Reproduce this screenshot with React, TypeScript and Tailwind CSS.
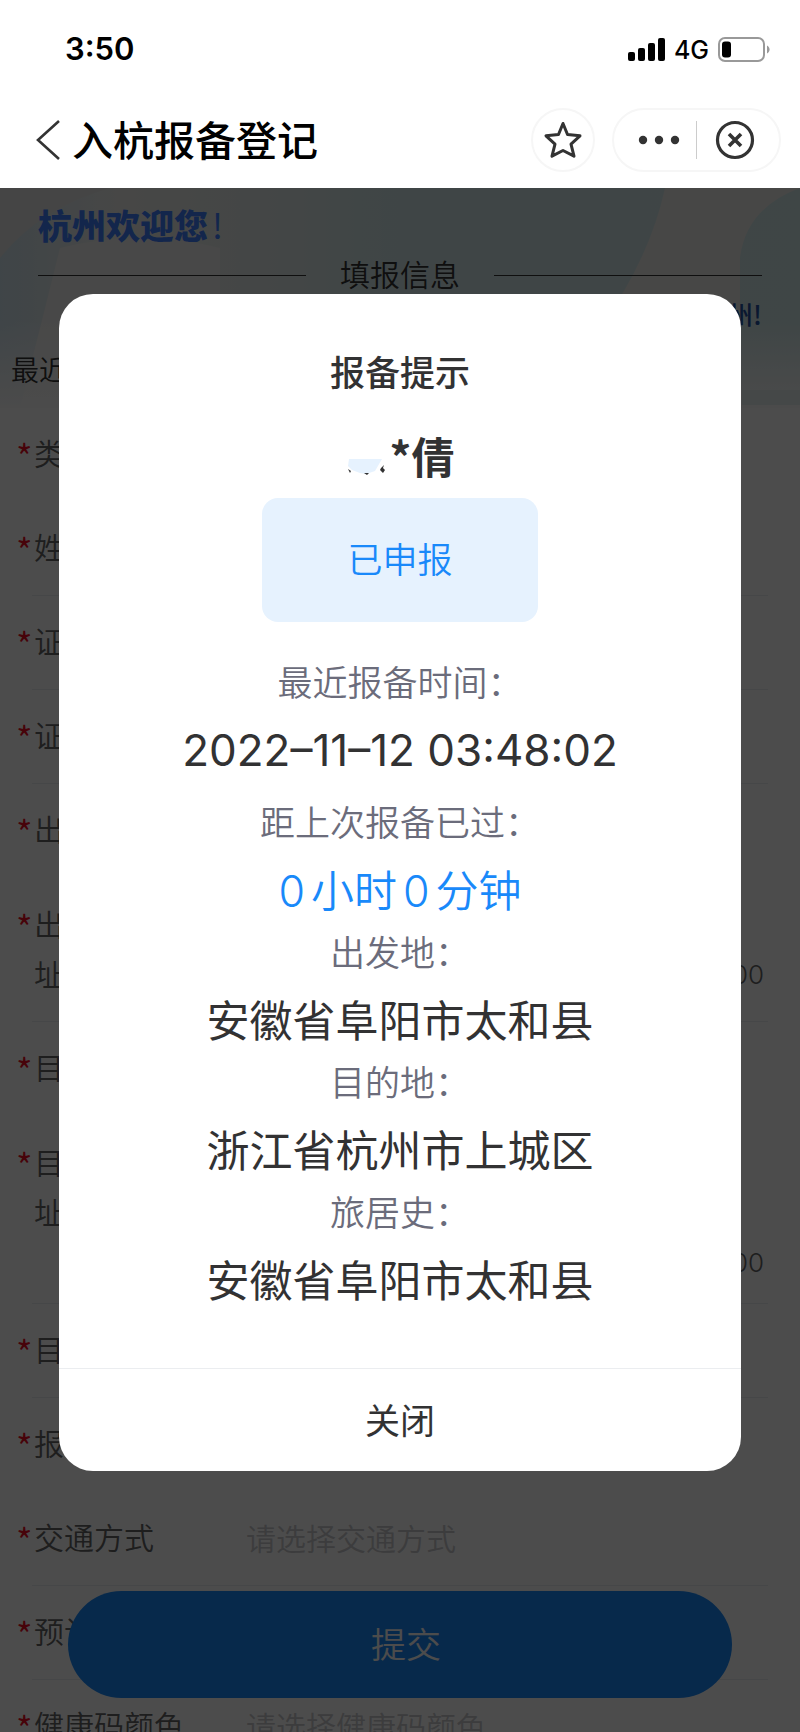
import { useId } from "react";
import clsx from "clsx";

interface FieldProps {
  label: string;
  placeholder?: string;
  divider?: boolean;
}

const RECORDS = [
  { label: "出发地：", value: "安徽省阜阳市太和县" },
  { label: "目的地：", value: "浙江省杭州市上城区" },
  { label: "旅居史：", value: "安徽省阜阳市太和县" },
];

function StatusBar() {
  return (
    <div className="flex h-[98px] items-center justify-between pr-[30px] pl-[65px] font-['Inter',sans-serif] text-black">
      <span className="text-[31px] font-semibold">3:50</span>
      <div className="flex items-center gap-[9px]">
        <svg width="37" height="24" viewBox="0 0 37 24" fill="currentColor" aria-hidden="true">
          <rect x="0" y="15" width="7" height="9" rx="2" />
          <rect x="10" y="11" width="7" height="13" rx="2" />
          <rect x="20" y="6" width="7" height="18" rx="2" />
          <rect x="30" y="1" width="7" height="23" rx="2" />
        </svg>
        <span className="pt-1 text-[25px] font-medium">4G</span>
        <svg width="52" height="25" viewBox="0 0 52 25" aria-hidden="true">
          <rect x="1" y="1" width="45" height="23" rx="6" fill="none" stroke="#999" strokeWidth="2" />
          <rect x="4" y="4.500" width="9" height="16" rx="3" fill="#000" />
          <path d="M49 8.500c3.400 1.800 3.400 6.200 0 8z" fill="#999" />
        </svg>
      </div>
    </div>
  );
}

function NavBar() {
  return (
    <nav className="flex h-[84px] items-center pr-[19px] pl-9">
      <button type="button" aria-label="返回" className="shrink-0">
        <svg width="24" height="42" viewBox="0 0 24 42" fill="none" stroke="#333" strokeWidth="2.600">
          <path d="M23 2 2 21l21 19" />
        </svg>
      </button>
      <h1 className="ml-3 pb-1 text-[41px] leading-[56px] font-medium text-black">入杭报备登记</h1>
      <button
        type="button"
        aria-label="收藏"
        className="ml-auto flex size-16 items-center justify-center rounded-full border-2 border-[#f6f6f6]"
      >
        <svg width="40" height="40" viewBox="0 0 40 40" fill="none" stroke="#333" strokeWidth="3" strokeLinejoin="round">
          <path d="m20 3.500 4.500 11 12.500 1.300-9 8.400 3 12-11-5.700-11 5.700 3-12-9-8.400 12.500-1.300z" />
        </svg>
      </button>
      <div className="ml-[17px] flex h-16 w-[169px] items-center rounded-full border-2 border-[#f6f6f6]">
        <button type="button" aria-label="更多" className="flex flex-1 items-center justify-center pl-2">
          <svg width="42" height="10" viewBox="0 0 42 10" fill="#333">
            <circle cx="5" cy="5" r="4.200" />
            <circle cx="21" cy="5" r="4.200" />
            <circle cx="37" cy="5" r="4.200" />
          </svg>
        </button>
        <span className="h-[38px] w-px bg-[#ccc]" />
        <button type="button" aria-label="关闭页面" className="flex w-[82px] items-center justify-center pr-1.5">
          <svg width="40" height="40" viewBox="0 0 40 40" fill="none" stroke="#333">
            <circle cx="20" cy="20" r="17.500" strokeWidth="3.200" />
            <path d="m14 14 12 12M26 14 14 26" strokeWidth="3.600" />
          </svg>
        </button>
      </div>
    </nav>
  );
}

function Banner() {
  return (
    <div className="relative">
      <svg
        className="absolute inset-0 h-full w-full"
        viewBox="0 0 800 220"
        preserveAspectRatio="none"
        aria-hidden="true"
      >
        <defs>
          <linearGradient id="sky" x1="0" x2="1" y1="0" y2="0">
            <stop offset="0" stopColor="#d4e6f0" />
            <stop offset="0.150" stopColor="#eeefec" />
            <stop offset="0.350" stopColor="#e2ebec" />
            <stop offset="0.500" stopColor="#d2e8ea" />
            <stop offset="0.800" stopColor="#d4e8ea" />
            <stop offset="1" stopColor="#d2e9ea" />
          </linearGradient>
          <linearGradient id="fade" x1="0" x2="0" y1="0" y2="1">
            <stop offset="0.600" stopColor="#fbfbfb" stopOpacity="0" />
            <stop offset="1" stopColor="#fbfbfb" />
          </linearGradient>
        </defs>
        <rect width="800" height="220" fill="url(#sky)" />
        <path d="M0 0h110Q40 20 0 70z" fill="#e8e8e6" />
        <path d="M665 0h135q-54 20-60 70v70H600q50-70 65-140z" fill="#efeeec" />
        <path d="M60 60q80-20 160 0v160H20z" fill="#f2f2f0" />
        <rect width="800" height="220" fill="url(#fade)" />
        <path d="M742 202h58v15h-58z" fill="#e8f0f0" />
      </svg>
      <div className="relative h-[220px] pt-3">
        <p className="pl-[38px] text-[34px] leading-[50px] font-black text-[#4080ff]">
          杭州欢迎您<span className="ml-1 font-normal">!</span>
        </p>
        <div className="flex items-center gap-[34px] px-[38px]">
          <span className="h-px flex-1 bg-[#323233]" />
          <h2 className="pb-1 text-[30px] leading-[46px] font-[350] text-[#323233]">填报信息</h2>
          <span className="h-px flex-1 bg-[#323233]" />
        </div>
        <p className="pr-[38px] text-right text-[26px] leading-7 font-medium text-[#2450a0]">州!</p>
        <p className="pt-[11px] pl-[11px] text-[28px] leading-[60px] font-[350] text-[#323233]">最近</p>
      </div>
    </div>
  );
}

function Required() {
  return <span className="w-[18px] text-[36px] leading-[56px] text-[#ee0a24]">*</span>;
}

function Field({ label, placeholder, divider }: FieldProps) {
  const id = useId();
  return (
    <div className="relative h-[94px] pr-8 pl-4">
      <div className="flex h-full items-center">
        <label htmlFor={id} className="flex w-[230px] shrink-0">
          <Required />
          {label}
        </label>
        {placeholder ? (
          <select id={id} className="mb-1 min-w-0 flex-1 appearance-none bg-transparent text-[#c8c9cc]">
            <option>{placeholder}</option>
          </select>
        ) : (
          <input id={id} className="min-w-0 flex-1 bg-transparent" />
        )}
      </div>
      {divider && <span className="absolute right-8 bottom-0 left-8 h-px bg-[#ebedf0]" />}
    </div>
  );
}

function AddressField({ label, tall }: { label: string[]; tall?: boolean }) {
  const id = useId();
  return (
    <div className={clsx("relative flex pt-5 pr-9 pl-4", tall ? "h-[188px]" : "h-[144px]")}>
      <label htmlFor={id} className="flex w-[230px] shrink-0">
        <Required />
        <span>
          {label[0]}
          <br />
          {label[1]}
        </span>
      </label>
      <div className="flex flex-1 flex-col">
        <textarea
          id={id}
          className={clsx("w-full resize-none bg-transparent", tall ? "h-[102px]" : "h-[52px]")}
        />
        <span className="text-right font-['Inter',sans-serif] text-[26px] font-light">00</span>
      </div>
      <span className="absolute right-8 bottom-0 left-8 h-px bg-[#ebedf0]" />
    </div>
  );
}

function ReportForm() {
  return (
    <form className="text-[30px] leading-[50px] font-[350] text-[#646566]">
      <Field label="类" />
      <Field label="姓" divider />
      <Field label="证" divider />
      <Field label="证" divider />
      <Field label="出" />
      <AddressField label={["出", "址"]} />
      <Field label="目" />
      <AddressField label={["目", "址"]} tall />
      <Field label="目" divider />
      <Field label="报" />
      <Field label="交通方式" placeholder="请选择交通方式" divider />
      <Field label="预计" divider />
      <Field label="健康码颜色" placeholder="请选择健康码颜色" />
    </form>
  );
}

function ItemLabel({ children }: { children: string }) {
  return <dt className="text-[35px] leading-[50px] font-[350] text-[#6b6c7b]">{children}</dt>;
}

function ReportDialog() {
  return (
    <div
      role="dialog"
      aria-labelledby="dialog-title"
      className="overflow-hidden rounded-[34px] bg-white text-center text-[#323233]"
    >
      <h2 id="dialog-title" className="pt-[49px] text-[35px] leading-[56px] font-medium">
        报备提示
      </h2>
      <div className="mt-[26px] flex items-center justify-center gap-1 text-[43px] leading-[60px] font-bold">
        {/* smudged part of the name */}
        <svg width="40" height="20" viewBox="0 0 40 20" className="mt-6" aria-hidden="true">
          <path d="M3 2h33l-7 12-9 3-6-1-8-3-4-4z" fill="#e6f2fe" />
          <path d="m2 12 3 2-1 2zM18 16h5l-2 2zM38 8l-1 3 2 2-2 3-3-3 1-2z" fill="#323233" />
        </svg>
        <span>*倩</span>
      </div>
      <div className="mx-auto mt-[13px] flex h-[124px] w-[276px] items-center justify-center rounded-2xl bg-[#e6f2fe] pb-1 text-[35px] font-[350] text-[#1989fa]">
        已申报
      </div>
      <dl className="mt-[34px] text-[43px] leading-[76px]">
        <ItemLabel>最近报备时间：</ItemLabel>
        <dd className="mb-2 pt-1.5 font-['Inter',sans-serif] text-[44px]">2022–11–12 03:48:02</dd>
        <ItemLabel>距上次报备已过：</ItemLabel>
        <dd className="flex h-20 items-baseline justify-center gap-1.5 pt-1 font-[350] text-[#1989fa]">
          <span className="font-['Inter',sans-serif]">0</span>
          <span>小时</span>
          <span className="font-['Inter',sans-serif]">0</span>
          <span>分钟</span>
        </dd>
        {RECORDS.map(r => (
          <div key={r.label}>
            <ItemLabel>{r.label}</ItemLabel>
            <dd className="pt-1">{r.value}</dd>
          </div>
        ))}
      </dl>
      <button type="button" className="mt-[52px] h-[103px] w-full border-t border-[#ebedf0] pb-0.5 text-[35px]">
        关闭
      </button>
    </div>
  );
}

export default function App() {
  return (
    <div className="flex h-screen flex-col overflow-hidden bg-white font-['Noto_Sans_CJK_SC',sans-serif]">
      <header className="shrink-0 pb-1.5">
        <StatusBar />
        <NavBar />
      </header>
      <main className="relative min-h-0 flex-1 overflow-hidden">
        <Banner />
        <ReportForm />
        <div className="absolute inset-x-[68px] bottom-[34px]">
          <button
            type="button"
            className="h-[107px] w-full rounded-full bg-[#1989fa] pb-0.5 pl-3 text-[35px] font-[350] text-white"
          >
            提交
          </button>
        </div>
        <div className="absolute inset-0 bg-black/70 px-[59px] pt-[106px]">
          <ReportDialog />
        </div>
      </main>
    </div>
  );
}
